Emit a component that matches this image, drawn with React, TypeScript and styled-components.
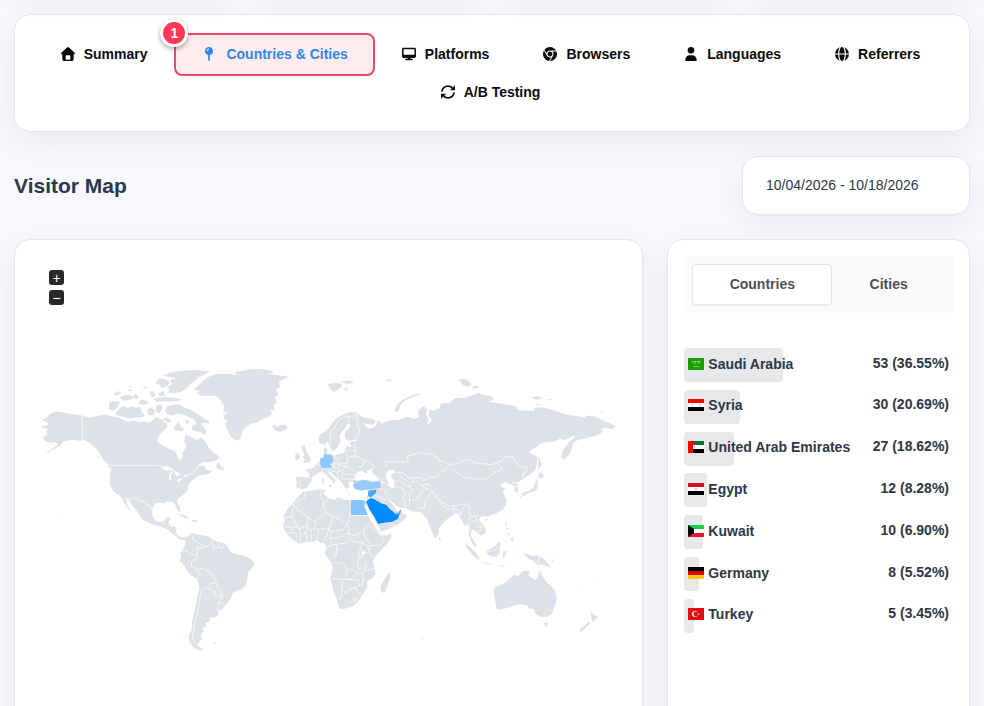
import React, { useState } from "react";
import styled, { createGlobalStyle, css } from "styled-components";
import { FaDesktop, FaChrome } from "react-icons/fa6";

const GlobalStyle = createGlobalStyle`
  * { box-sizing: border-box; }
  body {
    margin: 0;
    background: #f6f8fb;
    color: #2d3748;
    font-family: "Liberation Sans", Arial, sans-serif;
    font-size: 14px;
    line-height: 20px;
  }
  button, input { font: inherit; color: inherit; }
`;

const Page = styled.div`
  height: 100vh;
  overflow: hidden;
  padding: 0 14px;
`;

const cardStyle = css`
  background: #fff;
  border: 1px solid #e2e6ec;
  border-radius: 16px;
  box-shadow: 0 10px 30px rgba(0, 0, 0, 0.06);
`;

const StatRow = styled.div`
  display: grid;
  grid-template-columns: repeat(4, 1fr);
  gap: 24px;
  margin-top: -50px;
  padding-bottom: 24px;
`;

const StatCard = styled.div`
  ${cardStyle}
  height: 40px;
`;

const NavCard = styled.nav`
  ${cardStyle}
  display: flex;
  flex-wrap: wrap;
  justify-content: center;
  padding: 20px 20px 20px 17px;
`;

const NavItem = styled.a<{ $active?: boolean }>`
  position: relative;
  display: flex;
  align-items: center;
  gap: 9px;
  height: 38px;
  padding: 0 27px;
  color: ${(p) => (p.$active ? "#2b87e8" : "#0a0a0a")};
  font-weight: 700;
  text-decoration: none;
`;

const NavIcon = styled.span<{ $wide?: boolean }>`
  display: flex;
  justify-content: center;
  position: relative;
  width: ${(p) => (p.$wide ? 16 : 14)}px;
`;

const NavLabel = styled.span`
  position: relative;
`;

const Highlight = styled.span`
  position: absolute;
  inset: -2px 0 -3px;
  border: 2px solid #ea4a67;
  border-radius: 8px;
  background: #ffecef;
`;

const StepBadge = styled.span`
  position: absolute;
  top: -16px;
  left: -14px;
  width: 28px;
  height: 28px;
  border: 3px solid #fff;
  border-radius: 50%;
  background: #fd3857;
  box-shadow: 0 2px 5px rgba(0, 0, 0, 0.35);
  color: #fff;
  line-height: 22px;
  text-align: center;
`;

const TitleRow = styled.header`
  display: flex;
  align-items: center;
  justify-content: space-between;
  margin: 24px 0;
`;

const Title = styled.h1`
  margin: 0;
  font-size: 21px;
  line-height: 28px;
`;

const DateRange = styled.input`
  ${cardStyle}
  width: 228px;
  height: 59px;
  padding: 0 23px 2px;
  outline: none;
`;

const Columns = styled.main`
  display: grid;
  grid-template-columns: repeat(12, 1fr);
  gap: 24px;
`;

const MapCard = styled.section`
  ${cardStyle}
  grid-column: span 8;
  padding: 30px 0;
`;

const ZoomControls = styled.div`
  display: flex;
  flex-direction: column;
  gap: 5px;
  padding: 0 34px 5px;
`;

const ZoomButton = styled.button`
  width: 15px;
  height: 15px;
  padding: 0;
  border: 0;
  border-radius: 3px;
  background: #292929;
  color: #fff;
  line-height: 16px;
  text-align: center;
`;

const MapSvg = styled.svg`
  display: block;
  width: 100%;
`;

const ListCard = styled.section`
  ${cardStyle}
  grid-column: span 4;
  padding: 16px;
`;

const Tabs = styled.div`
  display: flex;
  padding: 8px;
  background: #f9fafb;
`;

const Tab = styled.button<{ $active: boolean }>`
  flex: 1 1 auto;
  height: 41px;
  padding: 0 16px 2px;
  border: 1px solid ${(p) => (p.$active ? "#e3e5e8" : "transparent")};
  border-radius: 4px;
  background: ${(p) => (p.$active ? "#fff" : "transparent")};
  box-shadow: ${(p) => (p.$active ? "0 1px 2px rgba(0,0,0,.06)" : "none")};
  color: #4b5157;
  font-weight: 700;
`;

const CountryList = styled.ul`
  display: flex;
  flex-direction: column;
  justify-content: space-between;
  min-height: 285px;
  margin: 35px 0 0;
  padding: 0;
  list-style: none;
`;

const CountryRow = styled.li`
  position: relative;
  display: flex;
  align-items: center;
  height: 34px;
  padding: 0 4px;
  font-weight: 700;
`;

const ShareBar = styled.span`
  position: absolute;
  inset: 0 auto 0 0;
  border-radius: 4px;
  background: #e7e8e9;
`;

const Flag = styled.svg`
  position: relative;
  width: 16px;
  height: 12px;
  margin: 0 4px 3px 0;
`;

const CountryName = styled.span`
  position: relative;
  flex: 1;
  padding-bottom: 3px;
`;

const CountryValue = styled.span`
  padding-bottom: 5px;
`;

const IconSvg = styled.svg`
  flex: none;
  width: 14px;
  height: 14px;
  fill: currentColor;
`;

const HouseIcon = () => (
  <IconSvg viewBox="0 0 42 42" aria-hidden="true">
    <path
      fillRule="evenodd"
      d="M18 1.500Q21-1 24 1.500L41 17Q43 20 40 22H38V37Q38 42 33 42H9Q4 42 4 37V22H2Q-1 20 1 17ZM16 25Q14 25 14 27V36Q14 38 16 38H26Q28 38 28 36V27Q28 25 26 25Z"
    />
  </IconSvg>
);

const PinIcon = () => (
  <IconSvg viewBox="0 0 42 42" aria-hidden="true">
    <path
      fillRule="evenodd"
      d="M21 0A12 12 0 0 1 23.500 23.700V40Q21 44 18.500 40V23.700A12 12 0 0 1 21 0ZM21 4.500Q14 5 13.500 12H16.500Q17 8 21 7.500Z"
    />
  </IconSvg>
);

const UserIcon = () => (
  <IconSvg viewBox="0 0 42 42" aria-hidden="true">
    <circle cx="21" cy="10" r="10" />
    <path d="M6 42Q3 42 4 38C5 30 10 25 16 25H26C32 25 37 30 38 38Q39 42 36 42Z" />
  </IconSvg>
);

const GlobeIcon = () => (
  <IconSvg viewBox="0 0 42 42" aria-hidden="true">
    <circle cx="21" cy="21" r="21" />
    <path d="M0 21H42" stroke="#fff" strokeWidth="3" />
    <ellipse cx="21" cy="21" rx="10" ry="23" fill="none" stroke="#fff" strokeWidth="3.500" />
  </IconSvg>
);

const RefreshIcon = () => (
  <IconSvg viewBox="0 0 42 42" aria-hidden="true">
    <g fill="none" stroke="currentColor" strokeWidth="5" strokeLinecap="round">
      <path d="M3 18A18.500 18.500 0 0 1 36 11" />
      <path d="M39 24A18.500 18.500 0 0 1 6 31" />
    </g>
    <path d="M42 1V16H27ZM0 41V26H15Z" />
  </IconSvg>
);

const DesktopIcon = () => <FaDesktop size={14} />;
const ChromeIcon = () => <FaChrome size={14} />;

const navItems = [
  { label: "Summary", Icon: HouseIcon },
  { label: "Countries & Cities", Icon: PinIcon, active: true },
  { label: "Platforms", Icon: DesktopIcon },
  { label: "Browsers", Icon: ChromeIcon },
  { label: "Languages", Icon: UserIcon },
  { label: "Referrers", Icon: GlobeIcon },
  { label: "A/B Testing", Icon: RefreshIcon },
];

const stripes = (a: string, b: string, c: string) => (
  <>
    <path fill={a} d="M0 0h16v4H0z" />
    <path fill={b} d="M0 4h16v4H0z" />
    <path fill={c} d="M0 8h16v4H0z" />
  </>
);

const flags: Record<string, React.ReactNode> = {
  sa: (
    <>
      <path fill="#1a9c00" d="M0 0h16v12H0z" />
      <path
        stroke="#a5d99a"
        fill="none"
        d="M4 3.500h1.500M6.500 3.500h2M9.500 3.500h3M4.500 5h1M6.500 5h1.500M9 5h1.500M11 5h1"
      />
      <path stroke="#77c568" fill="none" d="M5.500 8.500h6" />
    </>
  ),
  sy: (
    <>
      {stripes("#f00", "#fff", "#000")}
      <circle cx="4.500" cy="6" r=".7" fill="#8b948b" />
      <circle cx="12" cy="6" r=".7" fill="#8b948b" />
    </>
  ),
  ae: (
    <>
      {stripes("#00732f", "#fff", "#000")}
      <path fill="#f00" d="M0 0h5v12H0z" />
    </>
  ),
  eg: (
    <>
      {stripes("#ce1126", "#fff", "#000")}
      <path fill="#ecd8a8" d="M6.500 4.500h3L9 7.500H7z" />
    </>
  ),
  kw: (
    <>
      {stripes("#18cf4c", "#fff", "#e8102c")}
      <path d="M0 0l6 4v4l-6 4z" />
    </>
  ),
  de: stripes("#000", "#e00000", "#ffcb12"),
  tr: (
    <>
      <path fill="#e30a17" d="M0 0h16v12H0z" />
      <circle cx="7" cy="6" r="3" fill="#fff" />
      <circle cx="7.800" cy="6" r="2.400" fill="#e30a17" />
      <path fill="#fff" d="M9 6l3-1-1.500 1 1.500 1z" />
    </>
  ),
};

const countries = [
  { code: "sa", name: "Saudi Arabia", visits: 53, share: "36.55" },
  { code: "sy", name: "Syria", visits: 30, share: "20.69" },
  { code: "ae", name: "United Arab Emirates", visits: 27, share: "18.62" },
  { code: "eg", name: "Egypt", visits: 12, share: "8.28" },
  { code: "kw", name: "Kuwait", visits: 10, share: "6.90" },
  { code: "de", name: "Germany", visits: 8, share: "5.52" },
  { code: "tr", name: "Turkey", visits: 5, share: "3.45" },
];

const LAND = "#dee2e8";

const northAmerica =
  "M50,172 62,160 80,154 100,157 120,162 157,166 180,173 200,168 225,163 240,168 262,172 280,178 285,185 310,182 325,186 345,184 358,188 368,180 380,170 390,178 398,176 402,186 408,188 412,200 402,210 392,220 384,232 381,245 392,252 405,260 420,268 432,272 440,282 444,295 453,300 458,290 456,278 465,268 468,255 462,245 466,224 485,230 500,240 508,236 514,232 528,248 536,262 548,276 562,285 568,294 556,302 540,306 520,306 508,312 500,322 512,316 524,318 526,328 548,332 536,342 518,344 505,346 497,352 488,360 480,368 473,378 474,390 466,398 455,408 444,416 440,424 446,436 452,450 448,456 440,446 434,430 425,424 410,424 400,430 388,428 375,430 368,440 366,455 368,470 376,482 390,486 402,482 406,474 418,470 422,476 415,486 418,494 436,500 438,516 444,526 454,532 464,530 472,534 468,540 450,540 436,528 424,518 412,508 398,502 380,496 365,492 348,484 336,478 330,466 318,450 308,438 298,422 288,416 290,430 296,442 304,455 296,448 286,434 278,418 270,408 258,400 248,390 240,375 240,335 245,325 236,315 226,306 215,292 208,278 198,266 188,256 175,246 162,240 145,242 128,238 112,242 98,246 90,256 75,266 60,274 42,282 60,270 76,260 84,252 74,246 60,248 48,244 38,236 44,228 54,222 48,214 56,208 40,204 32,200 48,196 58,192 46,184 36,178Z";

const arcticIslands =
  "M405,150 412,138 430,134 450,134 462,142 480,148 495,158 510,166 520,176 536,182 538,192 525,188 512,190 520,200 530,212 524,224 510,216 498,214 484,208 488,196 498,192 494,180 478,172 462,164 440,160 428,166 412,164Z M436,196 446,186 452,200 464,206 456,212 440,212 430,206Z M466,180 478,182 474,190 466,188Z M256,160 268,146 280,136 292,144 305,138 318,142 330,140 335,156 345,166 335,172 315,172 298,176 280,170 262,166Z M236,148 238,128 250,122 270,126 264,140 252,152Z M350,150 362,142 376,152 370,164 356,166Z M378,138 392,132 398,144 388,160 378,154Z M270,112 284,104 302,106 312,114 300,120 278,122Z M250,104 262,94 274,96 264,106Z M308,110 316,102 326,108 322,118Z M326,124 336,118 348,122 358,128 342,134 326,132Z M368,116 400,110 440,114 456,118 440,123 400,124 380,124Z M358,96 370,94 376,108 366,114Z M374,68 388,54 404,58 420,66 412,78 396,84 388,74Z M383,100 400,94 408,106 390,108Z M292,78 306,78 302,82Z M332,78 354,82 348,86Z M294,90 304,88 304,94 296,94Z M398,46 420,38 450,32 500,30 540,34 524,44 505,52 495,62 480,72 468,86 452,96 430,100 410,98 420,90 412,82 426,72 420,60 440,54 420,52Z M400,176 414,172 424,184 412,188Z";

const americanIslands =
  "M556,320 566,306 570,316 580,322 582,330 566,328Z M442,462 460,464 478,474 468,476 456,468Z M484,480 500,480 502,484 488,486Z M86,477 88,477 88,480 86,480Z M226,314 238,320 246,328 238,326Z M198,284 208,292 206,296Z M464,483 472,485 466,486Z";

const greatLakes =
  "M395,323 408,317 424,324 432,330 418,331 406,330Z M424,334 430,334 422,346 424,360 416,358 417,344Z M432,334 444,336 450,344 442,350 436,344Z M440,360 458,352 458,356 446,364Z M462,346 474,344 472,349 462,350Z";

const northAmericaBorders =
  "M157,166V240L170,246 185,254 198,268 216,290M245,316H385L398,322M426,331 436,334M458,352 472,344 490,340 500,324M278,412 300,418 318,414 330,424 345,426 355,438 366,446M392,500 400,492 404,484M410,502 418,496 430,500M436,518 444,526";

const greenland =
  "M44,84 60,72 72,60 90,48 110,42 150,42 170,46 164,36 190,32 215,27 250,28 285,36 262,42 285,44 328,50 310,58 296,66 300,80 288,90 294,104 284,112 290,126 280,136 284,150 270,152 276,162 268,170 248,176 232,186 212,192 196,202 186,216 182,232 176,242 160,238 150,226 140,206 134,192 142,184 132,176 130,166 142,160 128,152 134,140 126,128 118,116 106,108 84,106 64,108 48,98 60,94 40,88Z M276,198 286,194 290,200 304,194 318,194 322,204 312,212 296,216 284,210Z";

const southAmerica =
  "M104,92 112,78 124,68 132,72 146,74 162,76 176,80 186,88 200,94 218,98 228,102 236,116 240,126 262,134 284,138 304,148 312,160 308,172 296,184 292,202 288,222 278,236 262,240 248,250 242,266 228,282 216,298 206,300 202,298 206,312 196,322 180,322 178,334 166,338 168,348 158,354 160,366 152,374 156,388 146,396 140,404 150,412 160,420 146,422 132,412 118,396 116,376 124,360 126,336 134,300 140,270 146,240 148,228 140,206 124,196 112,184 102,166 88,152 94,140 90,130 98,118 106,104 106,92 92,86 100,84Z M188,398 198,398 196,402 190,401Z";

const southAmericaBorders =
  "M98,122 112,124 126,132 142,136 138,146 124,156 124,168 138,172 138,180 146,178 M142,136 142,112 156,116 154,104 M126,72 128,88 144,96 154,104 168,110 178,106 186,92 M188,96 190,116 204,112 204,98 M220,100 216,114 204,112 M146,178 164,172 176,186 190,196 194,208 202,214 198,220 184,218 178,226 178,236 162,232 154,240 148,234 M178,236 196,246 192,258 208,260 214,250 208,240 202,232 200,222 M214,250 218,262 206,274 202,298 M206,274 226,286 M154,240 148,270 142,306 134,338 130,366 126,386 138,404 M140,206 146,196 144,178";

const eurasia =
  "M48,322 60,320 86,324 88,316 84,306 74,300 86,296 98,294 108,284 118,274 120,266 130,262 132,250 130,238 138,230 142,238 140,250 150,254 164,256 180,250 192,248 196,236 202,226 208,232 214,228 208,218 216,214 232,212 226,208 206,212 196,206 194,196 196,184 206,176 212,166 206,160 200,164 194,176 182,188 178,200 182,212 174,228 164,242 154,242 148,226 142,214 134,224 120,222 114,208 118,194 132,186 148,172 160,154 176,140 192,132 210,126 232,128 240,136 250,142 270,146 286,152 280,164 262,162 248,158 256,168 264,176 276,174 288,166 292,152 300,152 302,162 316,156 336,150 356,150 372,142 384,140 400,146 416,142 414,120 430,108 440,115 438,135 445,150 440,165 450,158 455,150 445,135 448,118 460,122 478,115 482,100 508,98 525,84 550,84 575,76 595,68 610,74 635,78 640,88 622,94 660,100 685,104 705,108 712,120 735,122 760,122 765,112 790,112 825,122 860,134 890,138 912,142 920,136 945,140 970,152 990,160 1005,168 995,178 978,172 962,178 968,185 950,196 935,200 910,206 888,212 878,220 874,238 864,256 850,270 844,262 846,244 856,228 868,214 882,202 886,194 870,202 856,210 838,206 825,214 800,216 780,220 768,230 752,240 746,248 762,254 772,262 770,280 765,300 752,312 738,320 726,330 708,337 714,356 712,368 704,366 702,350 695,344 685,342 678,336 662,342 660,350 672,354 680,352 668,362 672,374 680,390 678,404 668,418 652,428 635,434 622,440 610,438 600,440 596,450 606,460 616,474 616,488 604,496 594,492 588,484 578,478 572,484 572,498 580,512 588,522 588,534 578,524 570,506 566,488 566,470 560,462 552,466 546,452 538,440 532,430 520,434 510,440 498,450 484,464 476,476 476,490 468,504 462,500 454,482 444,458 442,448 434,440 426,432 420,426 400,424 388,420 374,414 360,412 350,406 335,394 324,386 332,398 340,408 346,416 352,424 358,422 364,418 366,430 380,435 372,450 350,465 320,478 302,484 296,470 284,448 270,424 260,408 256,398 260,384 264,366 260,358 240,361 222,357 218,344 222,336 212,334 204,338 208,350 202,358 192,350 186,338 178,330 168,322 156,310 150,306 142,302 148,312 158,322 170,330 164,334 160,344 156,332 144,320 132,308 120,306 108,314 98,318 94,334 86,342 80,354 66,358 56,354 48,350 50,336Z";

const eurasianIslands =
  "M64,228 74,224 76,236 82,250 92,266 90,276 68,280 74,268 68,262 74,252 66,242Z M46,252 56,248 60,260 54,270 44,268Z M142,42 158,40 176,38 186,46 176,58 162,66 150,56Z M178,36 205,31 222,38 205,42Z M192,56 200,54 204,60 196,62Z M342,122 350,104 368,88 395,76 420,69 418,74 400,80 380,88 364,100 356,120 350,126Z M314,33 334,27 330,34Z M536,30 550,26 562,30 574,42 566,50 546,44Z M574,52 586,46 596,52 582,57Z M752,82 770,78 788,84 770,90Z M800,86 816,88 806,91Z M768,102 784,104 772,106Z M956,124 970,123 966,127Z M774,258 780,270 785,284 778,294 774,300 775,272Z M772,318 780,306 792,318 780,326Z M772,328 774,342 770,358 758,366 740,370 730,378 720,374 734,366 752,360 762,346 766,330Z M718,378 726,380 722,388Z M674,422 676,426 672,432Z M614,446 624,447 618,453Z M142,346 156,344 154,352Z M126,326 132,326 131,342 126,340Z M202,368 214,369 208,371Z M248,366 256,364 250,370Z M674,460 680,456 678,470 688,478 680,478Z M690,506 700,500 698,514 690,510Z M682,486 688,490 686,498Z M552,520 566,528 586,546 600,568 592,568 574,550 562,536Z M600,574 620,578 642,582 622,582Z M618,540 632,536 646,526 654,514 662,520 658,532 658,548 648,560 632,558 620,550Z M668,546 686,542 674,550 680,554 674,556 680,566 672,558 668,570Z M650,586 680,586 662,590Z M704,540 708,546 704,548Z M726,550 740,552 756,558 772,556 794,568 812,592 796,586 784,582 770,584 760,574 746,566Z M814,570 824,566 818,574Z M478,500 483,512 476,510Z";

const oceania =
  "M280,294 300,284 318,276 330,264 342,254 356,258 362,246 376,240 388,244 384,256 396,264 408,270 414,256 416,242 424,248 430,262 438,276 452,286 466,304 470,322 464,346 454,372 440,380 422,380 408,374 402,360 396,354 388,358 382,346 364,342 344,346 326,352 304,358 290,358 286,338 282,318Z M432,396 444,398 440,408 434,408Z M568,360 580,374 592,378 584,390 576,396 574,384Z M564,394 570,400 556,414 546,424 536,424 540,414 556,404Z M588,270 594,270 592,273Z M528,290 540,290 536,293Z M62,442 68,441 68,446 63,446Z";

const africa =
  "M100,64 118,62 150,58 165,60 160,72 175,84 192,90 205,82 222,88 250,92 270,90 286,94 288,106 284,110 280,104 290,128 300,150 312,168 324,184 330,194 350,196 362,190 364,200 350,222 330,242 315,260 308,275 312,290 316,312 305,324 290,336 292,352 284,362 276,376 264,394 248,408 230,414 212,418 206,408 200,388 190,365 186,345 180,325 184,308 188,290 180,272 168,258 164,248 168,232 162,218 152,220 142,210 125,216 108,214 90,222 76,214 62,204 52,192 42,178 38,166 44,152 40,138 48,124 56,110 70,98 80,84 92,72Z M356,306 361,320 352,345 344,366 334,368 331,350 340,332Z";

const africaBorders =
  "M104,66 104,82 84,92 72,104 54,108 M72,104 74,112 66,118 66,140 44,142 M74,112 110,140 M110,140 134,154 168,130 160,108 158,88 150,80 156,60 M160,108 168,96 174,86 M168,130 184,134 232,162 236,158 236,136 M240,90 240,136 292,136 M66,140 84,170 64,172 44,168 M110,140 112,166 84,178 84,170 M134,154 138,164 132,176 112,180 112,166 M132,176 146,178 176,174 184,160 184,134 M176,174 182,186 196,182 218,178 232,162 M146,178 140,212 M108,184 110,214 M122,182 124,214 M88,180 90,194 104,192 104,184 M64,172 66,186 52,190 M66,186 78,190 80,208 M90,194 90,220 M176,174 170,196 162,212 M182,186 180,206 186,226 168,230 M180,206 200,204 222,196 236,188 232,162 M236,188 240,206 256,216 278,218 290,226 M232,190 250,196 270,190 284,172 296,162 M284,172 282,196 290,206 276,218 M296,162 308,176 324,190 344,208 328,226 300,226 M290,206 300,226 296,246 312,260 M276,218 270,236 296,252 M186,226 200,222 202,234 194,254 180,266 M200,222 222,220 240,206 M202,234 196,262 M188,276 204,282 216,276 224,288 230,300 244,296 260,308 266,296 262,280 266,256 270,236 M230,300 228,324 242,328 262,312 M184,326 228,328 242,328 M216,330 216,352 212,386 204,386 M216,362 228,368 240,358 256,350 268,346 262,330 242,328 M262,312 278,308 290,300 314,294 M278,308 280,324 276,344 268,346 M266,256 276,260 266,270 M266,296 284,298 288,280 M252,350 264,366 272,374 M250,386 258,382 260,390 252,394Z M290,226 300,242";

const eurasiaBorders =
  "M60,324 60,354 M86,324 100,326 M120,268 110,278 118,288 M120,284 128,294 124,306 M126,294 146,294 154,302 M158,264 160,278 178,284 176,292 154,292 M150,282 164,286 M160,256 180,280 200,280 204,262 196,250 M204,262 224,258 226,244 212,240 196,244 M226,244 224,222 M224,258 240,264 252,278 246,290 232,290 M200,280 196,290 212,294 224,306 M178,284 196,290 M196,290 184,304 190,312 226,314 M190,312 184,326 M170,296 184,304 170,306 154,302 M170,306 176,322 M186,326 206,328 224,326 M148,226 152,206 150,188 164,172 172,152 192,140 204,138 206,160 M204,138 216,142 230,132 232,160 238,184 228,208 M214,228 226,232 M246,270 260,272 278,284 280,296 M290,320 312,328 M300,334 316,338 324,350 M302,328 308,346 M300,354 312,360 320,376 324,386 M290,358 284,374 272,384 M284,374 304,386 320,390 M334,352 348,350 368,356 374,368 370,386 376,400 374,414 M344,340 356,330 376,346 392,352 M344,308 356,308 364,324 388,336 M318,290 318,276 336,276 352,274 384,276 382,258 400,254 422,246 444,252 462,252 476,270 492,276 508,284 M356,308 372,308 384,324 402,324 420,322 428,332 448,322 470,322 482,306 494,300 508,286 M392,352 384,348 396,342 390,334 M402,324 396,336 412,336 424,346 446,342 454,350 M392,352 398,358 388,374 388,388 402,390 418,380 424,364 440,356 424,346 M388,388 388,410 M440,356 454,360 448,374 432,398 434,414 420,416 M454,360 470,384 486,398 508,408 524,408 546,402 560,402 M508,284 532,280 548,274 568,268 576,276 600,280 632,284 648,278 664,290 666,298 648,304 630,318 614,328 580,326 552,322 534,310 524,300 508,286 M648,278 668,272 674,260 696,260 706,276 722,290 742,292 736,306 728,310 726,326 M702,350 712,350 M706,336 690,342 M486,398 482,404 504,418 518,418 M518,410 522,424 526,438 M520,416 532,420 540,432 538,440 546,424 552,408 562,400 568,420 568,432 574,442 566,448 568,470 572,484 M574,442 584,436 598,438 M584,436 590,452 606,470 602,480 594,484 M574,454 590,452 M588,472 606,470 M294,462 312,458 334,456 344,472 M354,446 362,434 M620,544 644,540 652,528 M774,558 774,582";

const inlandSeas =
  "M222,330 226,314 234,304 246,302 252,308 262,310 260,302 278,294 274,306 286,316 298,330 284,334 262,330 246,328 232,332Z M318,306 326,300 342,300 344,308 334,312 332,320 342,332 344,350 336,356 326,348 324,336 316,322Z";

const WorldMap = () => (
  <MapSvg viewBox="15 310 627 430" role="img" aria-label="Visitors by country">
    <g fill={LAND} stroke="none">
      <g transform="translate(30 360) scale(.33333)">
        <path d={northAmerica} />
        <path d={arcticIslands} />
        <path d={americanIslands} />
        <path d={greatLakes} fill="#fff" />
        <path d={northAmericaBorders} fill="none" stroke="#fff" strokeWidth="2" />
      </g>
      <path d={greenland} transform="translate(180 360) scale(.33333)" />
      <g transform="translate(150 510) scale(.33333)">
        <path d={southAmerica} />
        <path d={southAmericaBorders} fill="none" stroke="#fff" strokeWidth="2" />
      </g>
      <g transform="translate(270 470) scale(.33333)">
        <path d={africa} />
        <path d="M272,246 284,242 286,252 276,256Z" fill="#fff" />
        <path d={africaBorders} fill="none" stroke="#fff" strokeWidth="2" />
      </g>
      <g transform="translate(280 370) scale(.33333)">
        <path d={eurasia} />
        <path d={eurasianIslands} />
        <path d={inlandSeas} fill="#fff" />
        <path d={eurasiaBorders} fill="none" stroke="#fff" strokeWidth="2" />
        <path d="M120,266 130,262 132,250 140,254 154,252 158,264 160,276 150,282 154,292 140,294 126,294 120,284Z" fill="#90c8fc" />
        <path d="M219,344 226,338 238,332 256,330 272,336 300,334 301,353 280,356 262,358 244,361 226,357Z M218,332 230,332 222,338Z" fill="#96cafa" />
        <path d="M264,362 290,358 286,370 272,382 264,378Z" fill="#46a4fa" />
        <path d="M212,390 240,390 254,391 256,404 250,400 263,435H212Z" fill="#86c4ff" />
        <path d="M258,394 272,384 284,388 304,400 318,404 330,418 340,426 345,432 358,432 354,446 334,456 312,458 294,462 282,440 268,418Z" fill="#008cff" />
        <path d="M342,429 354,428 363,416 360,434 345,434Z" fill="#52adfb" />
      </g>
      <path d={oceania} transform="translate(400 490) scale(.33333)" />
    </g>
  </MapSvg>
);

export default function App() {
  const [tab, setTab] = useState("Countries");
  return (
    <>
      <GlobalStyle />
      <Page>
        <StatRow>
          {[0, 1, 2, 3].map((i) => (
            <StatCard key={i} />
          ))}
        </StatRow>
        <NavCard>
          {navItems.map(({ label, Icon, active }) => (
            <NavItem key={label} href="#" $active={active}>
              {active && <Highlight />}
              <NavIcon $wide={active}>
                <Icon />
              </NavIcon>
              <NavLabel>{label}</NavLabel>
              {active && <StepBadge>1</StepBadge>}
            </NavItem>
          ))}
        </NavCard>
        <TitleRow>
          <Title>Visitor Map</Title>
          <DateRange aria-label="Date range" defaultValue="10/04/2026 - 10/18/2026" />
        </TitleRow>
        <Columns>
          <MapCard>
            <ZoomControls>
              <ZoomButton aria-label="Zoom in">+</ZoomButton>
              <ZoomButton aria-label="Zoom out">−</ZoomButton>
            </ZoomControls>
            <WorldMap />
          </MapCard>
          <ListCard>
            <Tabs role="tablist">
              {["Countries", "Cities"].map((name) => (
                <Tab
                  key={name}
                  role="tab"
                  aria-selected={tab === name}
                  $active={tab === name}
                  onClick={() => setTab(name)}
                >
                  {name}
                </Tab>
              ))}
            </Tabs>
            <CountryList>
              {countries.map((c) => (
                <CountryRow key={c.code}>
                  <ShareBar style={{ width: `${c.share}%` }} />
                  <Flag viewBox="0 0 16 12" aria-hidden="true">
                    {flags[c.code]}
                  </Flag>
                  <CountryName>{c.name}</CountryName>
                  <CountryValue>{`${c.visits} (${c.share}%)`}</CountryValue>
                </CountryRow>
              ))}
            </CountryList>
          </ListCard>
        </Columns>
      </Page>
    </>
  );
}
